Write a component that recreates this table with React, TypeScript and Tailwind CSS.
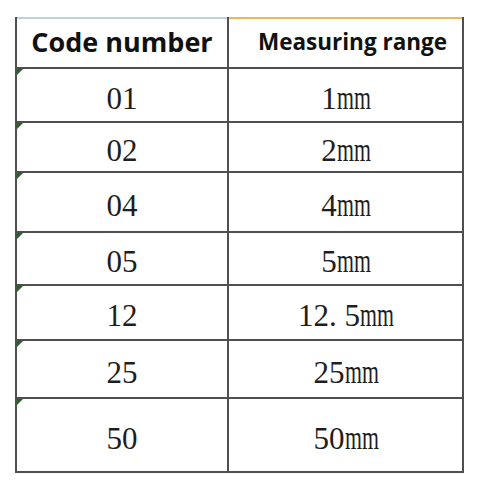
const rows = [
  { code: '01', range: '1', h: 'h-[54px]' },
  { code: '02', range: '2', h: 'h-[50px]' },
  { code: '04', range: '4', h: 'h-[60px]' },
  { code: '05', range: '5', h: 'h-[53px]' },
  { code: '12', range: '12. 5', h: 'h-[55px]' },
  { code: '25', range: '25', h: 'h-[58px]' },
  { code: '50', range: '50', h: 'h-[72px]' },
]

function Mark() {
  return (
    <span className="absolute left-0 top-0 w-0 h-0 border-t-[6px] border-t-[#1c6b1c] border-r-[6px] border-r-transparent" />
  )
}

function Mm() {
  // narrow half-width "mm" like the original
  return (
    <span className="inline-block w-[33px] overflow-visible">
      <span className="inline-block origin-left scale-x-[0.66] text-[33px]">mm</span>
    </span>
  )
}

export default function App() {
  return (
    <div className="w-[480px] h-[489px] bg-white pt-[17px] pl-[15px]">
      <div className="w-[449px] border-l-2 border-r-2 border-b-2 border-[#4f4f4f]">
        {/* header */}
        <div className="grid grid-cols-[212px_1fr] h-[52px] border-b-2 border-[#4f4f4f]">
          <div className="flex flex-col border-r-2 border-[#4f4f4f]">
            <div className="h-[2px] bg-[#bcd0e2]" />
            <div className="flex-1 flex items-center justify-center pb-[2px] text-[27px] font-bold text-[#111] font-['Open_Sans',sans-serif]">
              Code number
            </div>
          </div>
          <div className="flex flex-col">
            <div className="h-[2px] bg-[#f2b556]" />
            <div className="flex-1 flex items-center justify-center pb-[2px] pl-[14px] text-[22.5px] font-bold text-[#111] font-['Open_Sans',sans-serif]">
              Measuring range
            </div>
          </div>
        </div>

        {rows.map((r, i) => (
          <div
            key={r.code}
            className={`grid grid-cols-[212px_1fr] ${r.h} ${i < rows.length - 1 ? 'border-b-2' : ''} border-[#4f4f4f] text-[31px] leading-none text-[#1e1e1e] font-['Liberation_Serif',serif]`}
          >
            <div className="relative flex items-center justify-center pt-[6px] border-r-2 border-[#4f4f4f]">
              <Mark />
              {r.code}
            </div>
            <div className="flex items-center justify-center pt-[6px]">
              <span className="whitespace-pre">{r.range}</span>
              <Mm />
            </div>
          </div>
        ))}
      </div>
    </div>
  )
}
